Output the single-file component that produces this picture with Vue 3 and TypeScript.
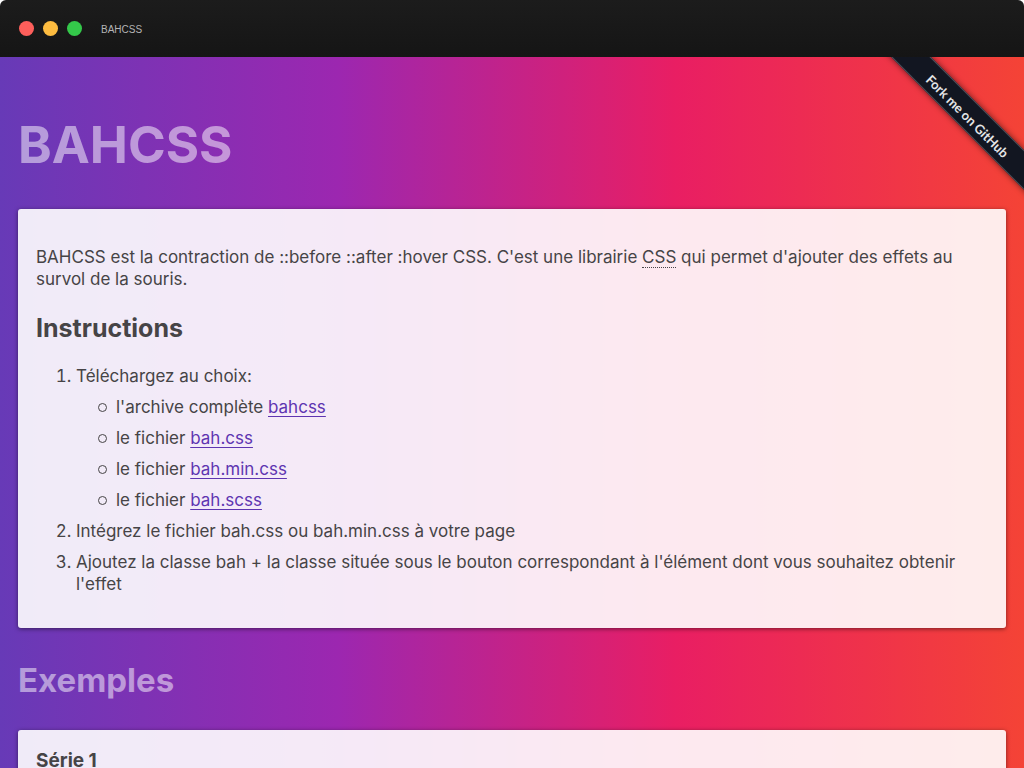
<script setup lang="ts">
interface Download {
  label: string
  link: string
}

const lights: string[] = ['close', 'minimize', 'expand']

const downloads: Download[] = [
  { label: "l'archive complète", link: 'bahcss' },
  { label: 'le fichier', link: 'bah.css' },
  { label: 'le fichier', link: 'bah.min.css' },
  { label: 'le fichier', link: 'bah.scss' },
]
</script>

<template>
  <div class="window">
    <header class="titlebar">
      <div class="lights">
        <span v-for="light in lights" :key="light" class="light" :class="light"></span>
      </div>
      <span class="title">BAHCSS</span>
    </header>

    <main class="page">
      <div class="corner">
        <a class="ribbon" href="#"><span class="ribbon-text">Fork me on GitHub</span></a>
      </div>

      <h1 class="hero">BAHCSS</h1>

      <section class="card">
        <p class="intro">
          BAHCSS est la contraction de ::before ::after :hover CSS. C'est une librairie
          <abbr class="abbr">CSS</abbr> qui permet d'ajouter des effets au survol de la souris.
        </p>
        <h2 class="subtitle">Instructions</h2>
        <ol class="steps">
          <li>
            Téléchargez au choix:
            <ul class="files">
              <li v-for="file in downloads" :key="file.link" class="file">
                <span>{{ file.label }} <a class="link" href="#">{{ file.link }}</a></span>
              </li>
            </ul>
          </li>
          <li>Intégrez le fichier bah.css ou bah.min.css à votre page</li>
          <li>
            Ajoutez la classe bah + la classe située sous le bouton correspondant à l'élément dont
            vous souhaitez obtenir l'effet
          </li>
        </ol>
      </section>

      <h2 class="section-title">Exemples</h2>

      <section class="card">
        <h3 class="series">Série 1</h3>
      </section>
    </main>
  </div>
</template>

<style>
body {
  margin: 0;
  background: #fff;
}
</style>

<style scoped>
.window {
  display: flex;
  flex-direction: column;
  height: 100vh;
  overflow: hidden;
  border-radius: 6px 6px 0 0;
  font-family: Inter, 'Liberation Sans', sans-serif;
  font-size: 17px;
  line-height: 22px;
  color: #464446;
}

.titlebar {
  display: flex;
  align-items: center;
  flex: none;
  gap: 19px;
  height: 57px;
  padding: 0 19px;
  box-sizing: border-box;
  background: linear-gradient(#1c1c1c, #151515);
}

.lights {
  display: flex;
  gap: 9px;
}

.light {
  width: 15px;
  height: 15px;
  border-radius: 50%;
}

.close {
  background: #fd5f5b;
}

.minimize {
  background: #fdbc40;
}

.expand {
  background: #34c84a;
}

.title {
  padding-top: 2px;
  font-family: 'Liberation Sans', Arial, sans-serif;
  font-size: 10px;
  color: #b4b4b4;
}

.page {
  position: relative;
  flex: 1;
  min-height: 0;
  padding: 0 18px;
  overflow: hidden;
  background: linear-gradient(to right, #673ab7, #9c27b0 33%, #e91e63 66%, #f44336);
}

.corner {
  position: absolute;
  top: 0;
  right: 0;
  width: 149px;
  height: 149px;
  overflow: hidden;
}

.ribbon {
  position: absolute;
  top: 41px;
  left: -19px;
  width: 220px;
  height: 28px;
  box-sizing: border-box;
  transform: rotate(45deg);
  border: solid #4a525c;
  border-width: 1px 0;
  background: #121621;
  box-shadow: 0 0 6px rgba(0, 0, 0, 0.6);
  text-align: center;
  text-decoration: none;
}

.ribbon-text {
  display: block;
  padding: 4px 0 0 8px;
  font-family: Lato, 'Open Sans', sans-serif;
  font-size: 13px;
  font-weight: 700;
  line-height: 22px;
  color: #e4e5e7;
}

.hero {
  margin: 56px 0 32px;
  font-size: 51px;
  line-height: 64px;
  color: rgba(255, 255, 255, 0.5);
}

.card {
  padding: 18px;
  border-radius: 3px;
  background: rgba(255, 255, 255, 0.9);
  box-shadow: 0 1px 4px rgba(0, 0, 0, 0.5);
}

.intro {
  margin: 19px 0 22px;
}

.abbr {
  border-bottom: 1px dotted #464446;
  text-decoration: none;
}

.subtitle {
  margin: 0 0 21px;
  font-size: 25px;
  line-height: 32px;
}

.steps,
.files {
  display: flex;
  flex-direction: column;
  gap: 9px;
  margin: 0;
  padding-left: 40px;
}

.steps {
  margin-bottom: 15px;
}

.files {
  margin-top: 9px;
  list-style: none;
}

.file {
  display: flex;
  align-items: center;
}

.file::before {
  content: '';
  flex: none;
  width: 9px;
  height: 9px;
  margin: 0 9px 0 -18px;
  box-sizing: border-box;
  border: 1px solid #464446;
  border-radius: 50%;
}

.link {
  color: #5e35b1;
  text-decoration: underline 1px;
  text-decoration-skip-ink: none;
  text-underline-offset: 3px;
}

.section-title {
  margin: 30px 0 28px;
  font-size: 33px;
  line-height: 44px;
  color: rgba(255, 255, 255, 0.5);
}

.series {
  margin: 0;
  font-size: 19px;
  line-height: 26px;
}
</style>
